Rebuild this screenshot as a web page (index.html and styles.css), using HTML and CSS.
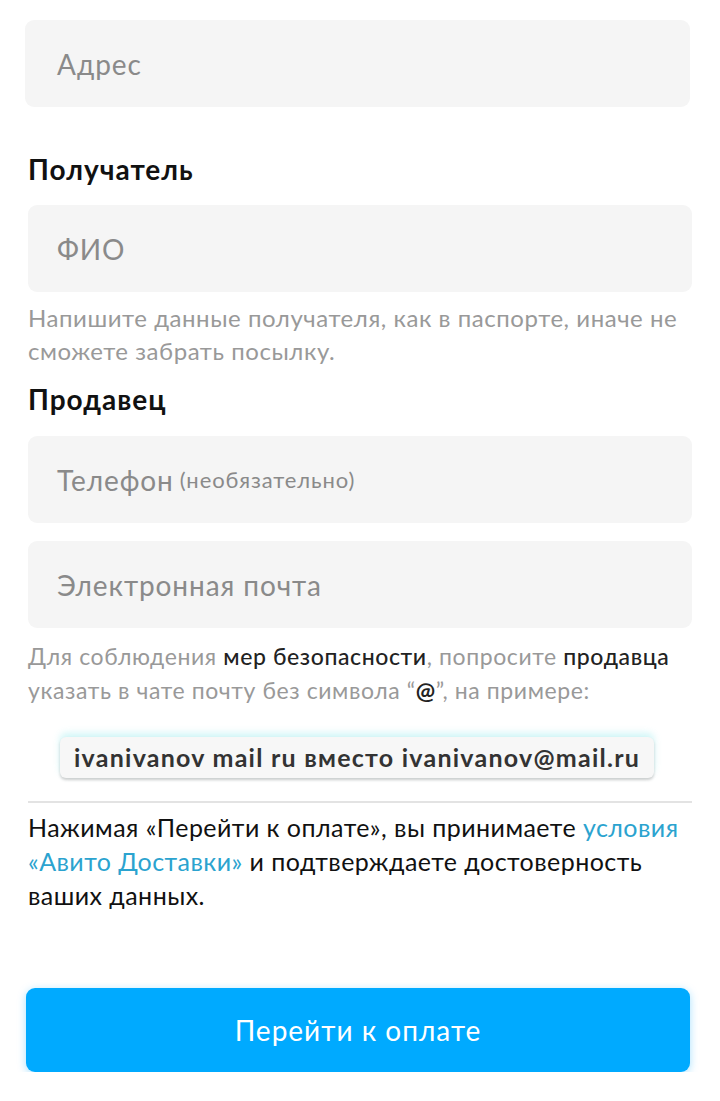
FILE: index.html
```html
<!DOCTYPE html>
<html lang="ru">
<head>
<meta charset="utf-8">
<link rel="stylesheet" href="styles.css">
</head>
<body>
<div class="page">
  <div class="field field-first">Адрес</div>

  <h2 class="title title-recipient">Получатель</h2>
  <div class="field">ФИО</div>
  <p class="hint">Напишите данные получателя, как в паспорте, иначе не сможете забрать посылку.</p>

  <h2 class="title title-seller">Продавец</h2>
  <div class="field">Телефон <span class="opt">(необязательно)</span></div>
  <div class="field field-email">Электронная почта</div>
  <p class="hint hint-security">Для соблюдения <b>мер безопасности</b>, попросите <b>продавца</b> указать в чате почту без символа “<b class="at">@</b>”, на примере:</p>

  <div class="chip-row"><span class="chip">ivanivanov mail ru вместо ivanivanov@mail.ru</span></div>

  <hr class="divider">

  <p class="terms">Нажимая «Перейти к оплате», вы принимаете <a class="link">условия «Авито Доставки»</a> и подтверждаете достоверность ваших данных.</p>

  <button class="pay">Перейти к оплате</button>
</div>
</body>
</html>
```

FILE: styles.css
```css
* { box-sizing: border-box; }
html, body { margin: 0; padding: 0; background: #fff; }
body { font-family: Lato, "Open Sans", "Noto Sans", sans-serif; color: #111; }
.page { padding: 20px 28px 0 28px; display: flex; flex-direction: column; }
.field {
  height: 87px;
  background: #f5f5f5;
  border-radius: 9px;
  display: flex;
  align-items: center;
  padding-left: 29px;
  font-size: 28px;
  letter-spacing: 0.9px;
  color: #8a8a8a;
}
.field-first { margin-left: -3px; margin-right: 2px; padding-left: 32px; }
.opt { font-size: 22px; letter-spacing: 0.9px; margin-left: 6px; }
.field-email { margin-top: 18px; }
.title {
  margin: 0;
  font-size: 28px;
  font-weight: 700;
  color: #111;
  line-height: 34px;
  letter-spacing: 1px;
}
.title-recipient { margin-top: 45px; margin-bottom: 19px; }
.title-seller { margin-top: 15px; margin-bottom: 20px; }
.hint {
  margin: 9px 0 0 0;
  font-size: 24px;
  line-height: 33px;
  color: #999;
  letter-spacing: 0.55px;
}
.hint b { font-weight: 500; color: #222; }
.hint b.at { font-weight: 700; }
.hint-security { margin-top: 11px; font-size: 23px; line-height: 34px; letter-spacing: 0.6px; }
.chip-row { display: flex; margin-top: 30px; padding-left: 32px; }
.chip {
  display: inline-block;
  height: 41px;
  line-height: 41px;
  padding: 0 14px;
  background: #f7f7f7;
  border-radius: 6px;
  font-size: 25px;
  font-weight: 700;
  letter-spacing: 1.25px;
  color: #333;
  box-shadow: 0 -4px 7px rgba(140, 232, 235, 0.4), 0 2px 3px rgba(0, 0, 0, 0.2);
}
.divider {
  margin: 23px 0 0 0;
  border: 0;
  height: 2px;
  background: #e3e3e3;
}
.terms {
  margin: 7px 0 0 0;
  font-size: 25px;
  line-height: 34px;
  color: #111;
  letter-spacing: 0.45px;
}
.link { color: #2ba3cf; }
.pay {
  margin-top: 76px;
  margin-left: -2px;
  margin-right: 2px;
  height: 84px;
  background: #00aaff;
  border: 0;
  border-radius: 9px;
  color: #fff;
  font-family: inherit;
  font-size: 28px;
  letter-spacing: 1px;
  box-shadow: 0 2px 8px rgba(0, 170, 255, 0.35);
}
```
